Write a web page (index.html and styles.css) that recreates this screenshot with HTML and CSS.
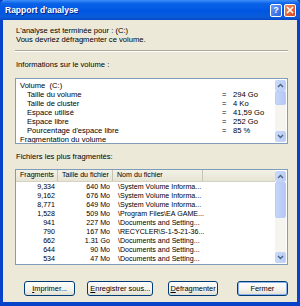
FILE: index.html
```html
<!DOCTYPE html>
<html>
<head>
    <link rel="stylesheet" href="styles.css">
</head>
<body>
    <div class="window">
        <div class="titlebar">
            <span class="title">Rapport d'analyse</span>
            <div class="title-buttons">
                <div class="tbtn help">?</div>
                <div class="tbtn close">
                    <svg width="8" height="8" viewBox="0 0 8 8"><path d="M1 1 L7 7 M7 1 L1 7" stroke="#fff" stroke-width="1.6"/></svg>
                </div>
            </div>
        </div>

        <div class="content">
            <div class="intro">
                <div>L'analyse est terminée pour : (C:)</div>
                <div>Vous devriez défragmenter ce volume.</div>
            </div>
            <div class="separator"></div>

            <div class="label">Informations sur le volume :</div>
            <div class="box volume-box">
                <div class="volume-list">
                    <div class="vrow"><span>Volume&nbsp; (C:)</span></div>
                    <div class="vrow sub"><span>Taille du volume</span><span>=</span><span>294 Go</span></div>
                    <div class="vrow sub"><span>Taille de cluster</span><span>=</span><span>4 Ko</span></div>
                    <div class="vrow sub"><span>Espace utilisé</span><span>=</span><span>41,59 Go</span></div>
                    <div class="vrow sub"><span>Espace libre</span><span>=</span><span>252 Go</span></div>
                    <div class="vrow sub"><span>Pourcentage d'espace libre</span><span>=</span><span>85 %</span></div>
                    <div class="vrow"><span>Fragmentation du volume</span></div>
                </div>
                <div class="scrollbar">
                    <div class="arrow"><svg width="7" height="5" viewBox="0 0 7 5"><path d="M1 4 L3.5 1.5 L6 4" fill="none" stroke="#4d6185" stroke-width="1.4"/></svg></div>
                    <div class="thumb short"></div>
                    <div class="track"></div>
                    <div class="arrow"><svg width="7" height="5" viewBox="0 0 7 5"><path d="M1 1 L3.5 3.5 L6 1" fill="none" stroke="#4d6185" stroke-width="1.4"/></svg></div>
                </div>
            </div>

            <div class="label">Fichiers les plus fragmentés:</div>
            <div class="box files-box">
                <div class="files">
                    <div class="frow header">
                        <span>Fragments</span><span>Taille du fichier</span><span>Nom du fichier</span><span></span>
                    </div>
                    <div class="frow"><span>9,334</span><span>640 Mo</span><span>\System Volume Informa...</span></div>
                    <div class="frow"><span>9,162</span><span>676 Mo</span><span>\System Volume Informa...</span></div>
                    <div class="frow"><span>8,771</span><span>649 Mo</span><span>\System Volume Informa...</span></div>
                    <div class="frow"><span>1,528</span><span>509 Mo</span><span>\Program Files\EA GAME...</span></div>
                    <div class="frow"><span>941</span><span>227 Mo</span><span>\Documents and Setting...</span></div>
                    <div class="frow"><span>790</span><span>167 Mo</span><span>\RECYCLER\S-1-5-21-36...</span></div>
                    <div class="frow"><span>662</span><span>1.31 Go</span><span>\Documents and Setting...</span></div>
                    <div class="frow"><span>644</span><span>90 Mo</span><span>\Documents and Setting...</span></div>
                    <div class="frow"><span>534</span><span>47 Mo</span><span>\Documents and Setting...</span></div>
                </div>
                <div class="scrollbar">
                    <div class="arrow"><svg width="7" height="5" viewBox="0 0 7 5"><path d="M1 4 L3.5 1.5 L6 4" fill="none" stroke="#4d6185" stroke-width="1.4"/></svg></div>
                    <div class="thumb long"></div>
                    <div class="track"></div>
                    <div class="arrow"><svg width="7" height="5" viewBox="0 0 7 5"><path d="M1 1 L3.5 3.5 L6 1" fill="none" stroke="#4d6185" stroke-width="1.4"/></svg></div>
                </div>
            </div>

            <div class="buttons">
                <button class="btn w-print"><u>I</u>mprimer...</button>
                <button class="btn w-save"><u>E</u>nregistrer sous...</button>
                <button class="btn w-defrag"><u>D</u>éfragmenter</button>
                <button class="btn w-close default">Fermer</button>
            </div>
        </div>
    </div>
</body>
</html>
```

FILE: styles.css
```css
body {
    margin: 0;
    width: 300px;
    height: 306px;
    overflow: hidden;
    font-family: "Liberation Sans", Arial, sans-serif;
    font-size: 7.6px;
    color: #000;
}

.window {
    width: 300px;
    height: 306px;
    box-sizing: border-box;
    background: #ece9d8;
    border-left: 3px solid #0842c8;
    border-right: 3px solid #0842c8;
    border-bottom: 4px solid #0842c8;
    display: flex;
    flex-direction: column;
}

.titlebar {
    height: 20px;
    margin: 0 -3px;
    padding: 0 4px 0 5px;
    display: flex;
    align-items: center;
    justify-content: space-between;
    background: linear-gradient(#3d8ff8 0%, #0a62e8 18%, #0056e2 55%, #0a5cd8 85%, #0846c4 100%);
    border-radius: 5px 5px 0 0;
}

.title {
    color: #fff;
    font-weight: bold;
    font-size: 8.5px;
    text-shadow: 1px 1px 0 #0a1e8c;
}

.title-buttons {
    display: flex;
    gap: 2px;
}

.tbtn {
    width: 12px;
    height: 13px;
    box-sizing: border-box;
    border: 1px solid #fff;
    border-radius: 2px;
    display: flex;
    align-items: center;
    justify-content: center;
    color: #fff;
    font-weight: bold;
    font-size: 9px;
}

.help {
    background: linear-gradient(135deg, #6a9cf8, #2a62e0);
}

.close {
    background: linear-gradient(135deg, #f08a60, #d84a1e);
}

.content {
    flex: 1;
    padding: 6px 9px 0 12px;
    display: flex;
    flex-direction: column;
}

.intro {
    padding-left: 1px;
    line-height: 9px;
}

.separator {
    margin: 6px 0 0 0;
    border-top: 1px solid #aca899;
    border-bottom: 1px solid #fff;
}

.label {
    line-height: 9px;
    margin-top: 8px;
    padding-left: 1px;
}

.box {
    margin-top: 9px;
    background: #fff;
    border: 1px solid #7f9db9;
    display: flex;
    overflow: hidden;
}

.volume-box {
    height: 64px;
}

.volume-list {
    flex: 1;
    padding: 2px 0 0 4px;
}

.vrow {
    display: grid;
    grid-template-columns: 202px 11px auto;
    line-height: 9px;
    white-space: nowrap;
}

.vrow.sub > span:first-child {
    padding-left: 7px;
}

.scrollbar {
    width: 11px;
    display: flex;
    flex-direction: column;
    background: #f5f4ee;
    margin: 1px 1px 1px 0;
}

.arrow {
    height: 9px;
    background: linear-gradient(90deg, #cbdaf9, #b8cdf6);
    border: 1px solid #c4d4f6;
    border-radius: 2px;
    display: flex;
    align-items: center;
    justify-content: center;
}

.thumb {
    background: linear-gradient(90deg, #c6d6fb, #b4c8f4);
    border: 1px solid #bccdf4;
    border-radius: 2px;
}

.thumb.short {
    height: 12px;
}

.thumb.long {
    height: 34px;
}

.track {
    flex: 1;
}

.files-box {
    margin-top: 8px;
    height: 94px;
}

.files {
    flex: 1;
    font-size: 7.1px;
}

.frow {
    display: grid;
    grid-template-columns: 42px 55px 90px 1fr;
    line-height: 9px;
    white-space: nowrap;
}

.frow > span:nth-child(1),
.frow > span:nth-child(2) {
    text-align: right;
    padding-right: 3px;
}

.frow > span:nth-child(3) {
    padding-left: 5px;
}

.frow.header {
    height: 12px;
    line-height: 11px;
    background: linear-gradient(#f3f2e8, #e6e4d4);
    border-bottom: 1px solid #d6d2c2;
    box-sizing: border-box;
    margin-bottom: 1px;
}

.frow.header > span {
    text-align: left;
    padding: 0 0 0 4px;
    border-right: 1px solid #c7c5b2;
}

.frow.header > span:last-child {
    border-right: none;
}

.buttons {
    margin-top: 16px;
    padding: 0 0 0 9px;
    display: flex;
    gap: 0;
}

.btn {
    height: 15px;
    padding: 0;
    font-family: "Liberation Sans", Arial, sans-serif;
    font-size: 7.4px;
    color: #000;
    background: linear-gradient(#ffffff, #f3f2ec 60%, #e2dfd2);
    border: 1px solid #003c74;
    border-radius: 3px;
    white-space: nowrap;
}

.btn.default {
    box-shadow: inset 0 0 0 1px #8fb2ee;
}

.w-print { width: 52px; }
.w-save { width: 67px; margin-left: 12px; }
.w-defrag { width: 50px; margin-left: 15px; }
.w-close { width: 52px; margin-left: 19px; }
```
